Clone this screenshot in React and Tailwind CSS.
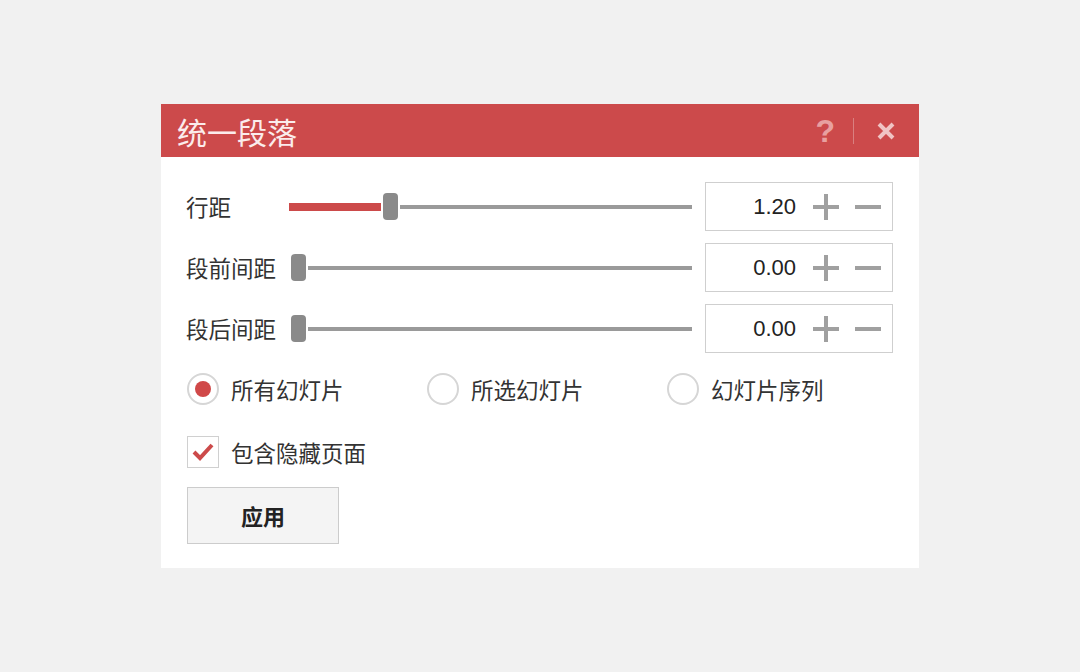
import React from 'react';

const font = { fontFamily: '"Noto Sans CJK SC", "Noto Sans", sans-serif' };

const Stepper = ({ value }) => (
  <div className="w-[188px] h-[49px] border border-[#cfcfcf] bg-white flex items-center justify-end pr-[10px]">
    <span className="text-[22px] text-[#222] mr-[16px]" style={{ fontFamily: '"Liberation Sans", Arial, sans-serif' }}>
      {value}
    </span>
    <svg width="28" height="28" viewBox="0 0 28 28" className="mr-[14px]">
      <path d="M14 1v26M1 14h26" stroke="#a0a0a0" strokeWidth="4" />
    </svg>
    <svg width="28" height="28" viewBox="0 0 28 28">
      <path d="M1 14h26" stroke="#a0a0a0" strokeWidth="4" />
    </svg>
  </div>
);

const Slider = ({ filled }) => (
  <div className="w-[403px] h-[30px] flex items-center shrink-0">
    {filled > 0 ? (
      <div className="h-[8px] bg-[#cc4a4a] mr-[2px]" style={{ width: filled }} />
    ) : (
      <div className="w-[2px]" />
    )}
    <div className="w-[15px] h-[27px] rounded-[4px] bg-[#8a8a8a]" />
    <div className="flex-1 h-[4px] bg-[#9a9a9a] ml-[2px]" />
  </div>
);

const Row = ({ label, filled, value }) => (
  <div className="flex items-center h-[49px]">
    <div className="w-[103px] shrink-0 text-[22.5px] text-[#333] leading-none whitespace-nowrap">{label}</div>
    <Slider filled={filled} />
    <div className="ml-[13px]">
      <Stepper value={value} />
    </div>
  </div>
);

const Radio = ({ label, checked }) => (
  <div className="w-[240px] shrink-0 flex items-center">
    <div className="w-[32px] h-[32px] rounded-full border-2 border-[#d6d6d6] bg-white flex items-center justify-center">
      {checked && <div className="w-[16px] h-[16px] rounded-full bg-[#d04848]" />}
    </div>
    <span className="ml-[12px] text-[22.5px] text-[#333] leading-none">{label}</span>
  </div>
);

export default function App() {
  return (
    <div className="min-h-screen bg-[#f1f1f1] flex items-center justify-center" style={font}>
      <div className="w-[758px] h-[464px] bg-white flex flex-col">
        {/* Title bar */}
        <div className="h-[53px] bg-[#cc4a4b] flex items-center pl-[16px] pr-[24px]">
          <span className="text-[30px] text-[#fbecec] leading-none flex-1">统一段落</span>
          <span
            className="text-[32px] font-bold text-[#e8a0a0] leading-none"
            style={{ fontFamily: '"Liberation Sans", Arial, sans-serif' }}
          >
            ?
          </span>
          <div className="w-px h-[26px] bg-[#d98080] mx-[18px]" />
          <svg width="18" height="18" viewBox="0 0 18 18" className="ml-[5px]">
            <path d="M2 2l14 14M16 2L2 16" stroke="#f0c4c4" strokeWidth="4" />
          </svg>
        </div>

        <div className="flex-1 pl-[25px] pr-[25px] pt-[25px]">
          <div className="flex flex-col gap-[12px]">
            <Row label="行距" filled={92} value="1.20" />
            <Row label="段前间距" filled={0} value="0.00" />
            <Row label="段后间距" filled={0} value="0.00" />
          </div>

          <div className="flex items-center mt-[20px] pl-[1px]">
            <Radio label="所有幻灯片" checked />
            <Radio label="所选幻灯片" />
            <Radio label="幻灯片序列" />
          </div>

          <div className="flex items-center mt-[31px] pl-[1px]">
            <div className="w-[32px] h-[32px] border border-[#d0d0d0] bg-white flex items-center justify-center">
              <svg width="22" height="18" viewBox="0 0 22 18">
                <path d="M2 9l6 6L20 2" stroke="#cc4a4a" strokeWidth="4" fill="none" />
              </svg>
            </div>
            <span className="ml-[12px] text-[22.5px] text-[#333] leading-none">包含隐藏页面</span>
          </div>

          <div className="mt-[19px] pl-[1px]">
            <button className="w-[152px] h-[57px] bg-[#f4f4f4] border border-[#cccccc] text-[22px] font-bold text-[#222]">
              应用
            </button>
          </div>
        </div>
      </div>
    </div>
  );
}
